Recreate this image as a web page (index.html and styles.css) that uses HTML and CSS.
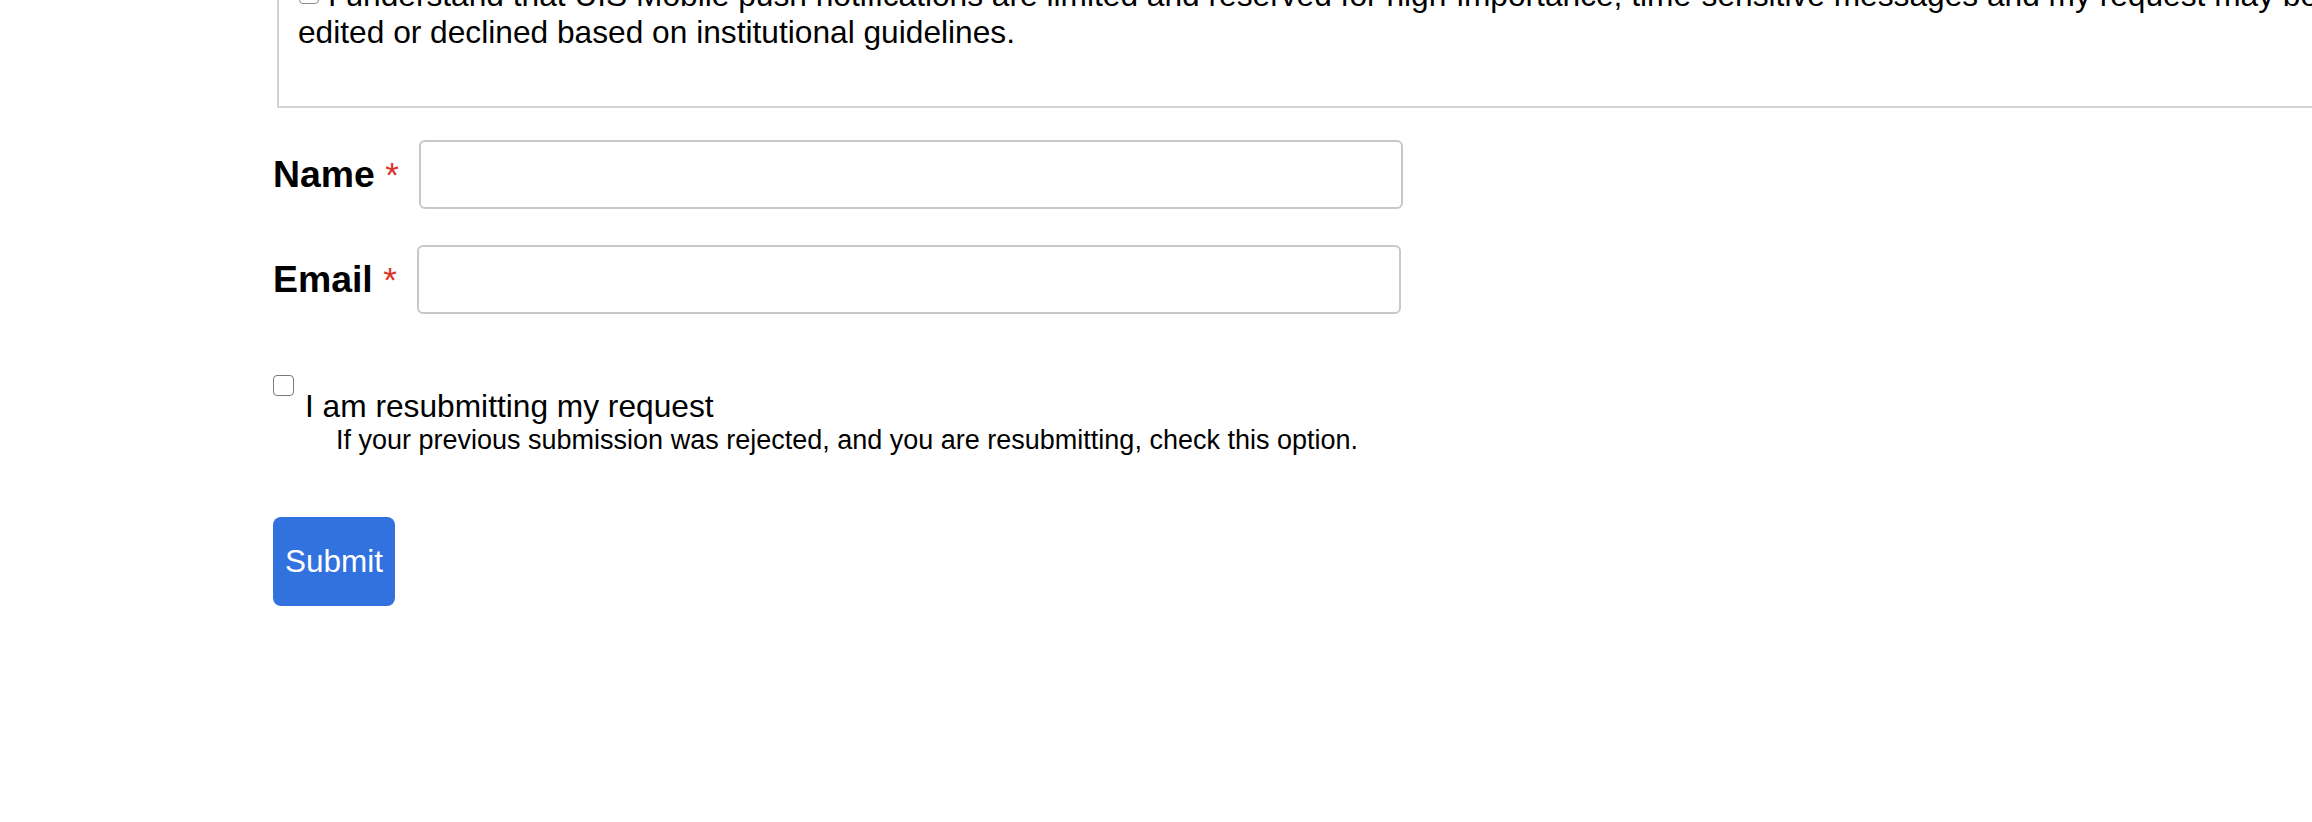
FILE: index.html
```html
<!DOCTYPE html>
<html>
<head>
    <meta charset="UTF-8">
    <title>Push Notification Request</title>
    <link rel="stylesheet" href="styles.css">
</head>
<body>
    <div class="page">
        <div class="notice">
            <label class="notice-line">
                <input type="checkbox" class="notice-check"> I understand that UIS Mobile push notifications are limited and reserved for high-importance, time-sensitive messages and my request may be<br>edited or declined based on institutional guidelines.
            </label>
        </div>
        <form class="request-form" onsubmit="return false;">
            <div class="field">
                <label class="field-label" for="name">Name <span class="req">*</span></label>
                <input type="text" id="name" class="text-input">
            </div>
            <div class="field">
                <label class="field-label" for="email">Email <span class="req">*</span></label>
                <input type="text" id="email" class="text-input">
            </div>
            <div class="resubmit">
                <input type="checkbox" id="resubmit" class="check">
                <div class="resubmit-text">
                    <label for="resubmit">I am resubmitting my request</label>
                    <p class="hint">If your previous submission was rejected, and you are resubmitting, check this option.</p>
                </div>
            </div>
            <button type="submit" class="submit">Submit</button>
        </form>
    </div>
</body>
</html>
```

FILE: styles.css
```css
html, body {
  margin: 0px;
  padding: 0px;
  background: #fff;
  overflow: hidden;
}
* {
  box-sizing: border-box;
}
body {
  font-family: "Liberation Sans", Arial, Helvetica, sans-serif;
  color: #000;
}
.page {
  padding-left: 273px;
}
/* agreement box, page is scrolled so its first line is cut off */
.notice {
  width: 2200px;
  margin-top: -35px;
  margin-left: 4px;
  padding: 10px 19px 55px 19px;
  border: 2px solid #d3d3d3;
  font-size: 31.7px;
  line-height: 37px;
  white-space: nowrap;
}
.notice-check {
  -webkit-appearance: none;
  appearance: none;
  display: inline-block;
  width: 20px;
  height: 20px;
  margin: 0px 0px 2px 1px;
  border: 1.5px solid #8a8a8a;
  border-radius: 4px;
  vertical-align: baseline;
}
.request-form {
  margin-top: 32px;
}
.field {
  display: flex;
  align-items: center;
  margin-bottom: 36px;
}
.field-label {
  font-size: 37.4px;
  font-weight: bold;
}
.req {
  color: #d8342a;
  font-weight: normal;
  font-size: 35px;
}
.text-input {
  width: 984px;
  height: 69px;
  margin: 0px 0px 0px 20px;
  border: 2px solid #c8c8c8;
  border-radius: 6px;
  font-size: 32px;
  padding: 0px 12px;
  background: #fff;
  outline: none;
}
.resubmit {
  display: flex;
  align-items: flex-start;
  margin-top: 61px;
}
.check {
  -webkit-appearance: none;
  appearance: none;
  width: 21px;
  height: 21px;
  margin: 0px;
  border: 1.5px solid #7a7a7a;
  border-radius: 4px;
  flex-shrink: 0;
}
.resubmit-text {
  margin-top: 13px;
  margin-left: 11px;
}
.resubmit-text label {
  display: block;
  font-size: 31.7px;
  line-height: 37px;
}
.hint {
  margin: 0px 0px 0px 31px;
  font-size: 27px;
  line-height: 30px;
}
.submit {
  display: block;
  margin-top: 62px;
  padding: 26px 12px;
  border: none;
  border-radius: 8px;
  background: #3172de;
  color: #fff;
  font-family: "Liberation Sans", Arial, Helvetica, sans-serif;
  font-size: 31.5px;
  line-height: 37px;
  cursor: pointer;
}
```
